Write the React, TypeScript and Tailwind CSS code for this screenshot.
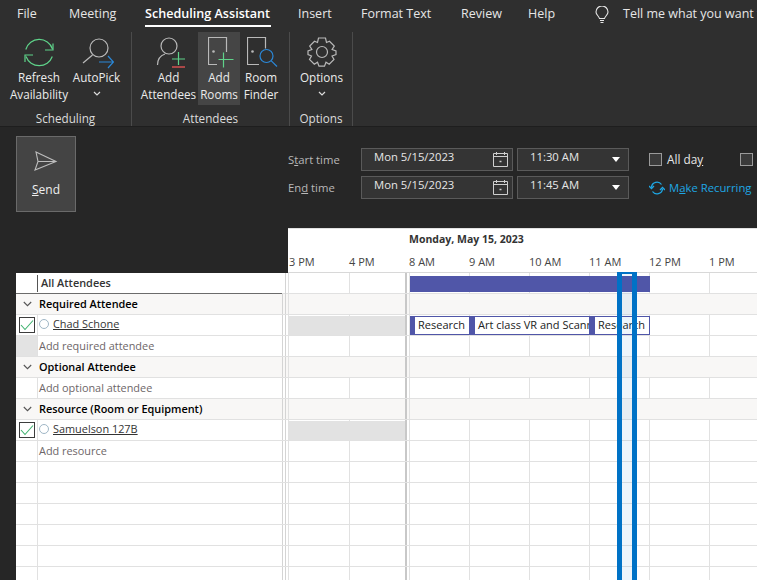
import React from "react";

const font = { fontFamily: '"Open Sans","Noto Sans",sans-serif' };

const Gn = "#5fd38a";
const Wh = "#b9b9b9";
const Bl = "#2b88d8";

function RefreshIcon() {
  return (
    <svg width="32" height="32" viewBox="0 0 32 32" fill="none" stroke={Gn} strokeWidth="1.2">
      <path d="M2.800 12.500A14 14 0 0 1 29.500 12" />
      <path d="M29.300 19.500A14 14 0 0 1 3 19.500" />
      <path d="M22 13h8V6.500" />
      <path d="M10 18H2v7" />
    </svg>
  );
}
function AutoPickIcon() {
  return (
    <svg width="34" height="33" viewBox="0 0 34 33" fill="none" strokeWidth="1.2">
      <circle cx="19" cy="11" r="9" stroke={Wh} />
      <path d="M12.500 18 3 26" stroke={Wh} />
      <path d="M19 25h14M28 19l5.500 6-5.500 6" stroke={Bl} />
    </svg>
  );
}
function AddAttendeeIcon() {
  return (
    <svg width="32" height="32" viewBox="0 0 32 32" fill="none" strokeWidth="1.2">
      <circle cx="16" cy="9" r="8" stroke={Wh} />
      <path d="M4.500 28c0-5.500 3-9.500 7.500-11" stroke={Wh} />
      <path d="M19 22h13M25.500 15v13" stroke={Gn} />
      <path d="M19 30h13" stroke="#e05252" strokeWidth="1.400" />
    </svg>
  );
}
function RoomsIcon() {
  return (
    <svg width="26" height="31" viewBox="0 0 26 31" fill="none" strokeWidth="1.2" className="ml-[3px]">
      <path d="M9 27.500H.5V.5h18V15" stroke={Wh} />
      <circle cx="5.500" cy="14.500" r="1.300" fill={Wh} />
      <path d="M10.500 22.500h15M15.500 15.500v15" stroke={Gn} />
    </svg>
  );
}
function FinderIcon() {
  return (
    <svg width="31" height="31" viewBox="0 0 31 31" fill="none" strokeWidth="1.2" className="ml-[3px]">
      <path d="M12 27.500H.5V.5h18v11" stroke={Wh} />
      <circle cx="5.500" cy="14.500" r="1.300" fill={Wh} />
      <circle cx="19.500" cy="19" r="6.500" stroke={Bl} />
      <path d="M24.300 23.800l5.700 5.700" stroke={Bl} />
    </svg>
  );
}
function GearIcon() {
  return (
    <svg width="30" height="30" viewBox="0 0 30 30" fill="none" stroke={Wh} strokeWidth="1.2">
      <circle cx="15" cy="15" r="5.500" />
      <path d="M11.500 1h7l1 4.500 3-1.200 4.800 4.800-2.200 3.400L29 14v3.500l-4 1.500 2 3.400-4.800 4.800-3.200-2-1.500 4h-5.500l-1.500-4-3.200 2L2.500 22.400l2-3.400L1 17.500V14l3.900-1.500L2.700 9.100l4.800-4.800 3 1.200z" />
    </svg>
  );
}
function Chevron() {
  return (
    <svg width="8" height="5" viewBox="0 0 8 5" fill="none" stroke="#dcdcdc" strokeWidth="1.200" className="mt-[5px]">
      <path d="M1 1l3 3 3-3" />
    </svg>
  );
}

function RibbonBtn({
  w,
  icon,
  lines,
  chevron,
  active,
}: {
  w: string;
  icon: React.ReactNode;
  lines: string[];
  chevron?: boolean;
  active?: boolean;
}) {
  return (
    <div className={`${w} h-[73px] shrink-0 flex flex-col items-center ${active ? "bg-[#454545]" : ""}`}>
      <div className="h-[37px] pt-[4.500px] flex justify-center w-full">{icon}</div>
      {lines.map((l) => (
        <div key={l} className="h-[16.500px] text-[11.700px] leading-[16px] whitespace-nowrap text-[#ebebeb]">
          {l}
        </div>
      ))}
      {chevron && <Chevron />}
    </div>
  );
}

function Group({ w, label, pl, children }: { w: string; label: string; pl: string; children: React.ReactNode }) {
  return (
    <div className={`${w} shrink-0 h-full flex flex-col border-r border-[#4b4b4b]`}>
      <div className={`flex ${pl} h-[77px] items-start`}>{children}</div>
      <div className="text-center text-[11.700px] leading-[16px] text-[#dcdcdc] mt-[4px]">{label}</div>
    </div>
  );
}

function CalIcon() {
  return (
    <svg width="17" height="17" viewBox="0 0 17 17" fill="none" stroke="#cfcfcf" strokeWidth="1">
      <path d="M1.500 2.500h14v13h-14zM1.500 5.500h14M4.500 1v3M12.500 1v3" />
      <path d="M7.500 10.500h2" strokeWidth="1.500" />
    </svg>
  );
}

function TimeRow({ label, time, children }: { label: React.ReactNode; time: string; children: React.ReactNode }) {
  return (
    <div className="flex items-center h-[23px] mb-[5px]">
      <div className="w-[73px] pt-[1px] text-[11.300px] text-[#b8b8b8]">{label}</div>
      <div className="w-[152px] h-[23px] border border-[#5a5a5a] bg-[#343434] flex items-center pl-[12px] pr-[3px] justify-between text-[11.300px] text-[#e6e6e6]">
        <span className="-mt-[4px]">Mon 5/15/2023</span>
        <CalIcon />
      </div>
      <div className="w-[112px] h-[23px] ml-[4px] border border-[#5a5a5a] bg-[#343434] flex items-center pl-[12px] pr-[3px] justify-between text-[11.300px] text-[#e6e6e6]">
        <span className="-mt-[4px]">{time}</span>
        <span className="w-0 h-0 mr-[5px] border-x-[4px] border-x-transparent border-t-[5px] border-t-white" />
      </div>
      {children}
    </div>
  );
}

const Box = ({ className }: { className: string }) => (
  <span className={`${className} inline-block shrink-0 w-[13px] h-[13px] border border-[#9a9a9a] bg-[#3a3a3a]`} />
);

const hours = ["8 AM", "9 AM", "10 AM", "11 AM", "12 PM", "1 PM"];

function TimeCells({ busy, section }: { busy?: boolean; section?: boolean }) {
  const line = section ? "border-transparent" : "border-[#e1e1e1]";
  return (
    <div className="flex-1 flex h-full">
      <div className="w-[61px] h-full shrink-0 border-l border-[#e1e1e1]">
        {busy && <div className="w-full h-[19px] mt-[1px] bg-[#e2e2e2]" />}
      </div>
      <div className={`w-[56px] h-full shrink-0 border-l ${busy ? "border-[#e2e2e2]" : line}`}>
        {busy && <div className="w-full h-[19px] mt-[1px] bg-[#e2e2e2]" />}
      </div>
      <div className="w-[4px] shrink-0 h-full border-l-2 border-[#c8c8c8]" />
      {hours.map((h, i) => (
        <div key={h} className={`w-[60px] shrink-0 h-full border-l ${i === 0 ? "border-[#e1e1e1]" : line}`} />
      ))}
    </div>
  );
}

function Check() {
  return (
    <div className="w-[16px] h-[16px] border border-[#3c3c3c] flex items-center justify-center bg-white">
      <svg width="14" height="12" viewBox="0 0 14 12" fill="none" stroke="#3fb26f" strokeWidth="1.100">
        <path d="M1 6l4 4.500L13 1.500" />
      </svg>
    </div>
  );
}

function Row({
  kind,
  children,
  check,
  grey,
  busy,
}: {
  kind?: "section" | "plain";
  children?: React.ReactNode;
  check?: React.ReactNode;
  grey?: boolean;
  busy?: boolean;
}) {
  const sec = kind === "section";
  return (
    <div className={`flex h-[21px] border-b border-[#e1e1e1] ${sec ? "bg-[#f8f7f6]" : "bg-white"}`}>
      <div className="w-[272px] shrink-0 flex h-full">
        <div className={`w-[22px] shrink-0 flex items-center justify-center ${sec ? "" : "border-r border-[#e1e1e1]"} ${grey ? "bg-[#e3e3e3]" : ""}`}>
          {check}
        </div>
        <div className={`w-[244px] shrink-0 flex items-center pl-[1px] ${busy ? "pb-[1px]" : ""} text-[10.900px] whitespace-nowrap overflow-hidden`}>{children}</div>
        <div className="w-[1px] bg-[#d4d4d4] shrink-0" />
        <div className="w-[1.500px] shrink-0" />
        <div className="w-[1.500px] bg-[#d4d4d4] shrink-0" />
      </div>
      <TimeCells busy={busy} section={sec} />
    </div>
  );
}

const SecChevron = () => (
  <svg width="9" height="6" viewBox="0 0 9 6" fill="none" stroke="#555" strokeWidth="1.100">
    <path d="M.800 1l3.700 3.700L8.200 1" />
  </svg>
);

const Person = ({ name }: { name: string }) => (
  <span className="flex items-center text-[#333]">
    <span className="w-[10px] h-[10px] rounded-full border border-[#9fb6c6] mr-[4px]" />
    <span className="underline">{name}</span>
  </span>
);

const Add = ({ t }: { t: string }) => <span className="text-[#6d6668]">{t}</span>;
const Sec = ({ t }: { t: string }) => <span className="font-semibold text-black">{t}</span>;

function Event({ w, text, pl, last }: { w: string; text: string; pl: string; last?: boolean }) {
  return (
    <div className={`${w} h-full shrink-0 ${pl} ${last ? "border-r border-[#5056a8]" : ""} overflow-hidden`}>
      <div className="bg-white h-full text-[11px] leading-[16px] text-[#222] pl-[3px] whitespace-nowrap overflow-hidden">{text}</div>
    </div>
  );
}

export default function App() {
  return (
    <div className="relative w-[757px] h-[580px] overflow-hidden bg-[#262626]" style={font}>
      {/* ribbon */}
      <div className="h-[126px] bg-[#2f2f2f] flex flex-col">
        <div className="h-[28px] flex text-[12.500px] leading-[28px] text-[#e6e6e6] whitespace-nowrap shrink-0">
          <span className="ml-[17px] w-[52px] shrink-0">File</span>
          <span className="w-[76px] shrink-0">Meeting</span>
          <span className="w-[153px] shrink-0 relative font-semibold text-white">
            <span className="text-[12.600px]">Scheduling Assistant</span>
            <span className="absolute left-0 top-[24.500px] w-[126px] h-[2px] bg-white" />
          </span>
          <span className="w-[63px] shrink-0">Insert</span>
          <span className="w-[100px] shrink-0">Format Text</span>
          <span className="w-[67px] shrink-0">Review</span>
          <span className="w-[67px] shrink-0">Help</span>
          <span className="w-[28px] shrink-0 flex pt-[6px]">
            <svg width="14" height="18" viewBox="0 0 14 18" fill="none" stroke="#e6e6e6" strokeWidth="1.100">
              <path d="M4.500 12.500C4 10 1 9 1 6a6 6 0 0 1 12 0c0 3-3 4-3.500 6.500zM5 14.500h4M5.500 16.500h3" />
            </svg>
          </span>
          <span className="shrink-0">Tell me what you want to do</span>
        </div>
        <div className="flex h-[98px] pt-[4px]">
          <Group w="w-[132px]" label="Scheduling" pl="pl-[8px]">
            <RibbonBtn w="w-[62px]" icon={<RefreshIcon />} lines={["Refresh", "Availability"]} />
            <div className="w-[1px]" />
            <RibbonBtn w="w-[51px]" icon={<AutoPickIcon />} lines={["AutoPick"]} chevron />
          </Group>
          <Group w="w-[158px]" label="Attendees" pl="pl-[10px]">
            <RibbonBtn w="w-[53px]" icon={<AddAttendeeIcon />} lines={["Add", "Attendees"]} />
            <div className="w-[3px]" />
            <RibbonBtn w="w-[42px]" active icon={<RoomsIcon />} lines={["Add", "Rooms"]} />
            <div className="w-[1px]" />
            <RibbonBtn w="w-[40px]" icon={<FinderIcon />} lines={["Room", "Finder"]} />
          </Group>
          <Group w="w-[63px]" label="Options" pl="pl-[8px]">
            <RibbonBtn w="w-[47px]" icon={<GearIcon />} lines={["Options"]} chevron />
          </Group>
        </div>
      </div>

      {/* compose area */}
      <div className="flex h-[147px] border-t border-[#1e1e1e]">
        <div className="w-[288px] shrink-0 pl-[16px] pt-[9px]">
          <div className="w-[60px] h-[76px] border border-[#6a6a6a] bg-[#444444] flex flex-col items-center pt-[14px]">
            <svg width="24" height="21" viewBox="0 0 24 21" fill="none" stroke="#bdbdbd" strokeWidth="1.100">
              <path d="M2 1l20 9.500L1 19l3-8.500zM4 10.500h18" />
            </svg>
            <span className="text-[12px] text-[#efefef] mt-[9px]">
              <u>S</u>end
            </span>
          </div>
        </div>
        <div className="flex-1 min-w-0 flex flex-col">
          <div className="h-[101px] pt-[21px]">
            <TimeRow label={<>S<u>t</u>art time</>} time="11:30 AM">
              <Box className="ml-[20px]" />
              <span className="ml-[5px] text-[11.800px] text-[#e6e6e6] w-[73px]">
                All da<u>y</u>
              </span>
              <Box className="" />
            </TimeRow>
            <TimeRow label={<>En<u>d</u> time</>} time="11:45 AM">
              <svg width="16" height="14" viewBox="0 0 16 14" fill="none" stroke="#1ea7e4" strokeWidth="1.300" className="ml-[20px] shrink-0">
                <path d="M2.500 6a5.500 5.500 0 0 1 10-2.500M13.500 8a5.500 5.500 0 0 1-10 2.500" />
                <path d="M0 5l2.500 2.500L5 5M11 9l2.500-2.500L16 9" />
              </svg>
              <span className="ml-[4px] pt-[1px] text-[11.300px] text-[#1ea7e4] whitespace-nowrap">
                M<u>a</u>ke Recurring
              </span>
            </TimeRow>
          </div>
          <div className="h-[45px] bg-white border-t border-[#e1e1e1] border-b border-b-[#d8d8d8]">
            <div className="ml-[121px] text-[10.500px] leading-[20px] font-bold text-[#333] whitespace-nowrap">
              Monday, May 15, 2023
            </div>
            <div className="flex text-[11px] leading-[24px] mt-[1px] text-[#444] whitespace-nowrap">
              <span className="w-[61px] shrink-0 pl-[1px]">3 PM</span>
              <span className="w-[60px] shrink-0">4 PM</span>
              {hours.map((h) => (
                <span key={h} className="w-[60px] shrink-0">{h}</span>
              ))}
            </div>
          </div>
        </div>
      </div>

      {/* grid */}
      <div className="pl-[16px] bg-[#262626]">
        <div className="bg-white">
          <div className="flex h-[21px] border-b border-[#e1e1e1]">
            <div className="w-[272px] shrink-0 flex h-[21px]">
              <div className="w-[266px] shrink-0 flex h-full items-center border-b border-[#6b6b6b]">
                <div className="w-[21px] shrink-0" />
                <div className="flex items-center pl-[3px] h-[17px] border-l border-[#555] text-[10.900px] font-semibold text-[#333]">
                  All Attendees
                </div>
              </div>
              <div className="w-[1px] shrink-0" />
              <div className="w-[1.500px] shrink-0" />
              <div className="w-[1.500px] bg-[#d4d4d4] shrink-0" />
            </div>
            <TimeCells />
          </div>
          <Row kind="section" check={<SecChevron />}><Sec t="Required Attendee" /></Row>
          <Row check={<Check />} busy><Person name="Chad Schone" /></Row>
          <Row grey><Add t="Add required attendee" /></Row>
          <Row kind="section" check={<SecChevron />}><Sec t="Optional Attendee" /></Row>
          <Row><Add t="Add optional attendee" /></Row>
          <Row kind="section" check={<SecChevron />}><Sec t="Resource (Room or Equipment)" /></Row>
          <Row check={<Check />} busy><Person name="Samuelson 127B" /></Row>
          <Row><Add t="Add resource" /></Row>
          <Row /><Row /><Row /><Row /><Row /><Row />
        </div>
      </div>

      {/* overlays on the timeline */}
      <div className="absolute left-[410px] top-[276px] w-[240px] h-[16px] bg-[#5056a8]" />
      <div className="absolute left-[410px] top-[316px] w-[240px] h-[19px] flex border-y border-[#5056a8] bg-[#5056a8]">
        <Event w="w-[59px]" pl="pl-[5px]" text="Research" />
        <Event w="w-[120px]" pl="pl-[6px]" text="Art class VR and Scanning" />
        <Event w="w-[61px]" pl="pl-[6px]" text="Research" last />
      </div>
      <div className="absolute left-[617px] top-[272px] bottom-0 w-[20px] border-x-[5px] border-t-2 border-[#0072c6] bg-[#0072c6]/[0.07]" />
    </div>
  );
}
